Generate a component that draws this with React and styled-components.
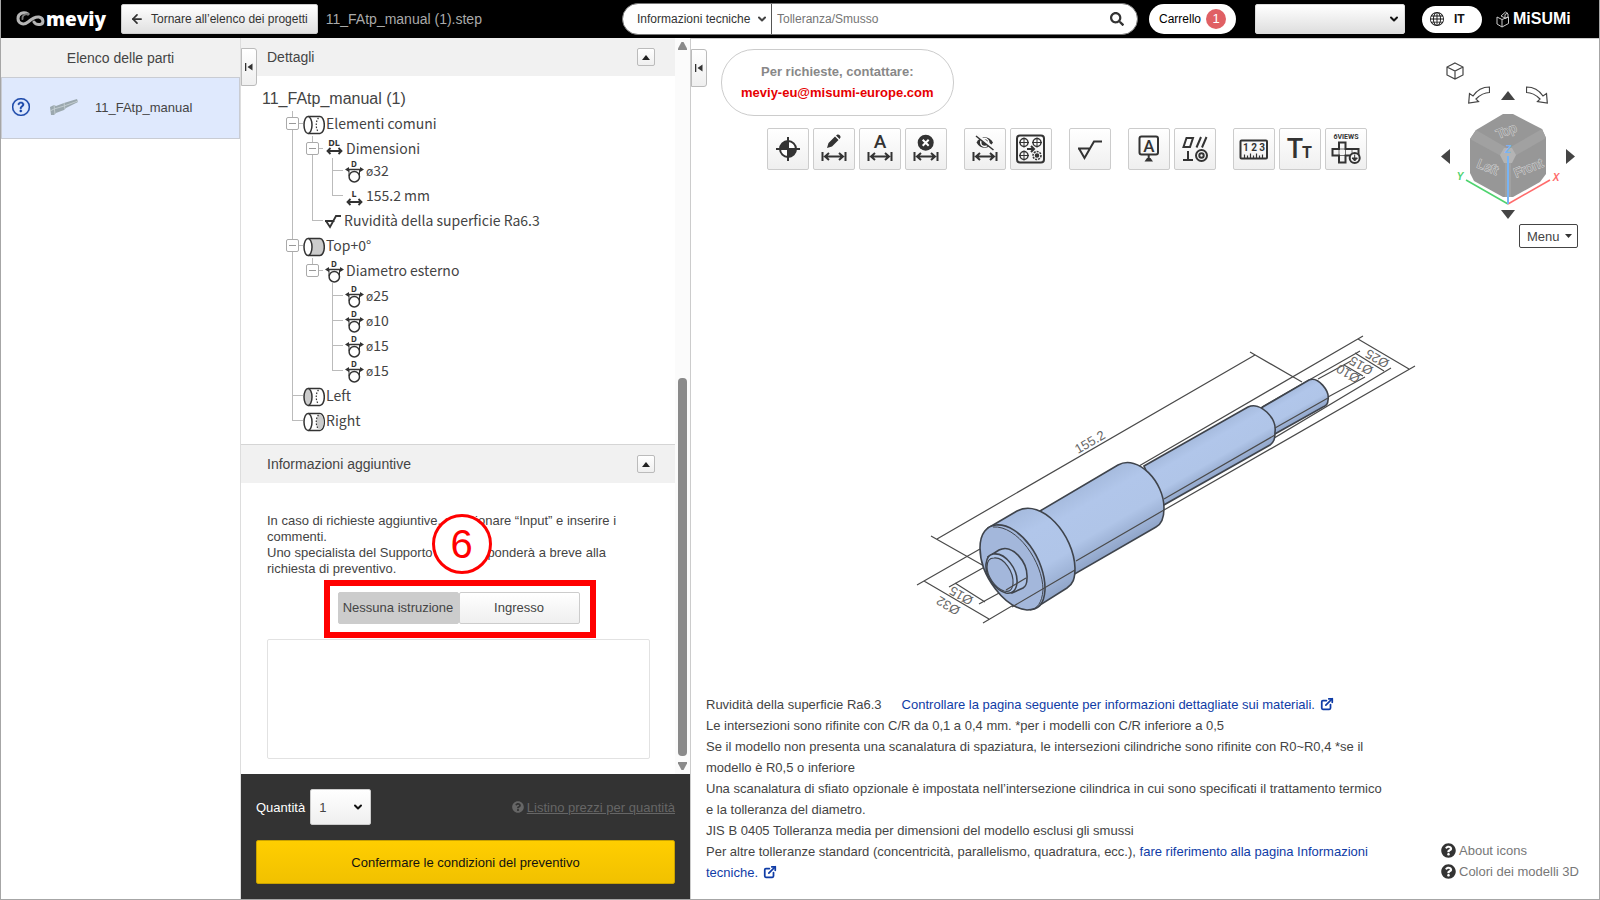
import React, { useState } from "react";
import styled, { createGlobalStyle, css } from "styled-components";
import { ArrowLeft, ChevronDown, ExternalLink } from "lucide-react";
import { FaSearch, FaQuestionCircle } from "react-icons/fa";
import { BsGlobe, BsQuestionCircle } from "react-icons/bs";

const IconText = styled.text`
  fill: #333;
  stroke: none;
  font: ${(p) => (p.$bold ? 700 : 500)} ${(p) => p.$size}px Roboto, sans-serif;
  text-anchor: middle;
`;

const treeRows = [
  { guides: ["box"], icon: "common", label: "Elementi comuni" },
  { guides: ["line", "box"], icon: "dl", label: "Dimensioni" },
  { guides: ["line", "line", "tee"], icon: "d", label: "32", tight: true },
  { guides: ["line", "line", "end"], icon: "l", label: "155.2 mm" },
  { guides: ["line", "end"], icon: "rough", label: "Ruvidità della superficie Ra6.3" },
  { guides: ["box"], icon: "top", label: "Top+0°" },
  { guides: ["line", "boxEnd"], icon: "d", label: "Diametro esterno", group: true },
  { guides: ["line", "none", "tee"], icon: "d", label: "25" },
  { guides: ["line", "none", "tee"], icon: "d", label: "10" },
  { guides: ["line", "none", "tee"], icon: "d", label: "15" },
  { guides: ["line", "none", "end"], icon: "d", label: "15" },
  { guides: ["tee"], icon: "left", label: "Left" },
  { guides: ["end"], icon: "right", label: "Right" },
];

function Cylinder({ kind }) {
  return (
    <svg width="22" height="25" fill="none" stroke="#333" strokeWidth="1.5">
      <path
        d="M5 5.5H17C19.5 5.5 21.3 9.5 21.3 14S19.5 22.5 17 22.5H5"
        fill={kind === "top" ? "#ccc" : "#fff"}
      />
      {kind === "right" && (
        <path d="M17 6C12 8 12 20 17 22C22 20 22 8 17 6Z" fill="#ccc" stroke="none" />
      )}
      {kind !== "top" && (
        <path d="M15.5 7C12.5 10 12.5 18 15.5 21" strokeDasharray="1.5 1.5" strokeWidth="1.2" />
      )}
      <ellipse cx="5" cy="14" rx="4" ry="8.5" fill={kind === "left" ? "#ccc" : "#fff"} />
    </svg>
  );
}

function TreeIcon({ type }) {
  if (type === "d") {
    return (
      <svg width="22" height="25" fill="none" stroke="#333" strokeWidth="1.5">
        <TinyText x="11" y="9">D</TinyText>
        <path d="M4 11.5H19" />
        <path d="M2 11.5L6 9V14ZM21 11.5L17 9V14Z" fill="#333" stroke="none" />
        <path d="M6 12V18M16.5 12V18" strokeWidth="1" />
        <circle cx="11.3" cy="18.7" r="5.2" fill="#fff" />
      </svg>
    );
  }
  if (type === "dl" || type === "l") {
    const y = type === "dl" ? 15 : 19;
    return (
      <svg width="22" height="25" fill="none" stroke="#333" strokeWidth="1.8">
        <TinyText x="11" y={y - 5} $size={9}>{type.toUpperCase()}</TinyText>
        <path d={`M4.5 ${y}H18.5M7.5 ${y - 3}L4.5 ${y}L7.5 ${y + 3}M15.5 ${y - 3}L18.5 ${y}L15.5 ${y + 3}`} />
      </svg>
    );
  }
  if (type === "rough") {
    return (
      <svg width="20" height="25" fill="none" stroke="#333" strokeWidth="1.8">
        <path d="M2 13H11.5M3 13L7 19L13 8H18" />
      </svg>
    );
  }
  return <Cylinder kind={type} />;
}

const dimArrow = (
  <path d="M9.5 24V33M32.5 24V33M12 28.5H30M16 25L12 28.5L16 32M26 25L30 28.5L26 32" />
);

const toolGroups = [
  [
    {
      name: "Origine",
      art: (
        <>
          <circle cx="21" cy="21" r="8" fill="#fff" />
          <path d="M21 21V13A8 8 0 0 0 13 21ZM21 21V29A8 8 0 0 0 29 21Z" fill="#333" stroke="none" />
          <path d="M21 9V33M9 21H33" />
        </>
      ),
    },
    {
      name: "Modifica quota",
      art: (
        <>
          <path d="M14 20L15.5 15L22 8.5L25.5 12L19 18.5ZM23 7.5L24.5 6.5C26 6 28 8 27.5 9.5L26.5 11Z" fill="#333" stroke="none" />
          {dimArrow}
        </>
      ),
    },
    {
      name: "Testo quota",
      art: (
        <>
          <IconText x="21" y="20" $size={19}>A</IconText>
          {dimArrow}
        </>
      ),
    },
    {
      name: "Elimina quota",
      art: (
        <>
          <circle cx="20.7" cy="14.7" r="8" fill="#333" stroke="none" />
          <path d="M17.7 11.7L23.7 17.7M23.7 11.7L17.7 17.7" stroke="#fff" />
          {dimArrow}
        </>
      ),
    },
  ],
  [
    {
      name: "Nascondi quote",
      art: (
        <>
          <path d="M12.5 14.5C16 7.5 25 7.5 29 14.5C25 21.5 16 21.5 12.5 14.5Z" fill="#333" stroke="none" />
          <circle cx="20.7" cy="14.5" r="4" stroke="#fff" strokeWidth="1.5" />
          <path d="M12.5 6.5L30.5 21" stroke="#f8f8f8" strokeWidth="3" />
          <path d="M12 8L29.5 22" strokeWidth="1.5" />
          {dimArrow}
        </>
      ),
    },
    {
      name: "Fori",
      art: (
        <>
          <rect x="7" y="7.5" width="27" height="27" rx="3" />
          <g strokeWidth="1.5">
            <circle cx="14" cy="14.5" r="4" />
            <circle cx="27" cy="14.5" r="4" />
            <circle cx="14" cy="27.5" r="4" />
            <circle cx="27" cy="27.5" r="4" strokeDasharray="2 1" />
            <circle cx="27" cy="27.5" r="1.5" fill="#333" />
          </g>
          <path d="M9 14.5H19M14 9.5V19.5M22 14.5H32M27 9.5V19.5M9 27.5H19M14 22.5V32.5" strokeWidth="1" />
          <path d="M17 21H24M21 18L24 21L21 24" />
        </>
      ),
    },
  ],
  [
    {
      name: "Rugosità",
      art: <path d="M9 20.5H21M10 20.5L15.5 30L25 13.5H33" />,
    },
  ],
  [
    {
      name: "Riferimento",
      art: (
        <>
          <rect x="11.5" y="8.5" width="18.5" height="18" rx="2" />
          <IconText x="21" y="24" $size={17}>A</IconText>
          <path d="M20.7 26V30" />
          <path d="M16.5 33.5L19 30H22.5L25 33.5Z" fill="#333" stroke="none" />
        </>
      ),
    },
    {
      name: "Tolleranze geometriche",
      art: (
        <>
          <path d="M12.5 10H19L16 19H9.5ZM27 9L22.5 19.5M32.5 9L28 19.5M9 32H19M14 23V32" />
          <circle cx="27.5" cy="27.5" r="5.5" />
          <circle cx="27.5" cy="27.5" r="2.2" />
        </>
      ),
    },
  ],
  [
    {
      name: "Unità",
      art: (
        <>
          <rect x="7.5" y="12.5" width="26.5" height="18" rx="1" />
          <IconText x="21" y="23" $size={10} $bold>1 2 3</IconText>
          <path d="M11.5 30V26.5M14.5 30V27.5M17.5 30V25.5M20.5 30V27.5M23.5 30V25.5M26.5 30V27.5M29.5 30V26.5" strokeWidth="1.2" />
        </>
      ),
    },
    {
      name: "Dimensione testo",
      art: (
        <>
          <IconText x="16" y="30" $size={27}>T</IconText>
          <IconText x="28" y="30" $size={16} $bold>T</IconText>
        </>
      ),
    },
    {
      name: "6 viste",
      art: (
        <>
          <IconText x="21" y="11" $size={7} $bold>6VIEWS</IconText>
          <path d="M14 14.5H20.5V21H33.5V27.5H20.5V34.5H14V27.5H7.5V21H14Z" />
          <path d="M14 21H20.5V27.5H14ZM27 21V27" strokeWidth="0.7" />
          <circle cx="29.7" cy="30" r="5" fill="#f5f5f5" />
          <path d="M29.7 26.5V32M27 30L29.7 33L32.4 30Z" fill="#333" strokeWidth="1" />
        </>
      ),
    },
  ],
];

function Toolbar() {
  return (
    <ToolbarRow>
      {toolGroups.map((group, i) => (
        <ToolGroup key={i}>
          {group.map((tool) => (
            <ToolButton key={tool.name} type="button" aria-label={tool.name}>
              <svg width="42" height="42" fill="none" stroke="#333" strokeWidth="2">
                {tool.art}
              </svg>
            </ToolButton>
          ))}
        </ToolGroup>
      ))}
    </ToolbarRow>
  );
}

// shading across each step of the shaft, all of them share the same axis
function ShaftGradient({ id, r }) {
  return (
    <linearGradient
      id={id}
      gradientUnits="userSpaceOnUse"
      x1={128 - r * 0.5}
      y1={239 - r * 0.87}
      x2={128 + r * 0.5}
      y2={239 + r * 0.87}
    >
      <stop offset="0" stopColor="#a6bbde" />
      <stop offset="0.25" stopColor="#b1c6ea" />
      <stop offset="0.65" stopColor="#b0c5e8" />
      <stop offset="1" stopColor="#8fa4c8" />
    </linearGradient>
  );
}

function ShaftDrawing() {
  return (
    <svg width="530" height="320" viewBox="0 0 530 320" fill="none" stroke="#4a4a4a" strokeWidth="1.2">
      <defs>
        <ShaftGradient id="s10" r={15} />
        <ShaftGradient id="s15" r={22} />
        <ShaftGradient id="s25" r={36} />
        <ShaftGradient id="s32" r={46} />
      </defs>
      <path d="M37 219L355 35M31 216L84 246M350 32L402 62" />
      <path d="M239 146L463 16M264 190L515 46M458 19L509 49" />
      <path d="M362 87L460 31M264 184L491 48M455 33L484 51" />
      <path d="M418 59L451 41M428 77L465 57M444 45L463 56" />
      <path d="M17 265L80 229M24 261L89 299M83 303L139 270" />
      <path d="M49 267L90 244M79 284L112 266M55 263L85 282" />
      <g strokeWidth="1.6" stroke="#3f444c">
        <path d="M361 88L409 60C418 56 430 71 428 80C428 84 426 86 423 87L373 115Z" fill="url(#s10)" />
        <path d="M244 146L348 87C360 81 377 98 375 112C375 119 374 122 370 125L262 186Z" fill="url(#s15)" />
        <path d="M140 191L218 145C238 134 264 162 264 188C264 198 262 204 256 207L173 255Z" fill="url(#s25)" />
        <path d="M88 208L117 191C142 178 174 215 175 248C175 259 173 264 167 268L137 287Z" fill="url(#s32)" />
        <path d="M96 205C120 203 146 240 145 270C144 285 138 290 127 290C105 288 80 256 80 228C80 213 87 206 96 205Z" fill="#a3b7db" />
        <path d="M93 207C117 205 143 242 143 270C142 283 137 289 130 290" strokeWidth="1" />
        <path d="M88 237L99 230C112 223 128 242 127 258C127 264 126 266 123 268L112 273Z" fill="#abc0e3" />
        <path d="M93 234C106 232 118 250 117 263C116 271 112 274 106 273C95 270 85 256 86 244C87 237 89 235 93 234Z" fill="#b0c6ea" />
        <path d="M94 238C104 237 114 252 113 264C112 271 109 272 104 271C95 268 87 256 87 247C87 241 90 238 94 238Z" fill="#a3b7db" strokeWidth="1.2" />
      </g>
      <path d="M176 241L264 190M264 179L375 115M375 108L428 78M112 287L175 250M106 270L126 258" />
      <g stroke="none" fill="#666">
        <DimText transform="translate(178 134) rotate(-30)">155.2</DimText>
        <DimText transform="translate(490 41) rotate(210)">Ø25</DimText>
        <DimText transform="translate(474 48) rotate(210)">Ø15</DimText>
        <DimText transform="translate(461 56) rotate(210)">Ø10</DimText>
        <DimText transform="translate(74 278) rotate(210)">Ø15</DimText>
        <DimText transform="translate(61 288) rotate(210)">Ø32</DimText>
      </g>
    </svg>
  );
}

function ViewCube() {
  return (
    <svg width="104" height="100" fill="none">
      <path d="M47 8H57L86 23L90 32V68L84 76L57 91H47L18 75L14 67V33L20 24Z" fill="#979797" />
      <path d="M14 33L20 24L51 42L47 51ZM90 32L86 23L53 42L57 51ZM49 55H55V91H49Z" fill="#a1a1a1" />
      <path d="M48 42H56L60 49L56 57H48L44 49Z" fill="#b4b4b4" />
      <CubeText transform="translate(52 29) rotate(-22)">Top</CubeText>
      <CubeText transform="translate(30 65) rotate(22)">Left</CubeText>
      <CubeText transform="translate(74 66) rotate(-22)">Front</CubeText>
      <path d="M52 98L10 74" stroke="#4fd36f" strokeWidth="1.5" />
      <path d="M52 98L94 74" stroke="#ff6b6b" strokeWidth="1.5" />
      <path d="M52 98V50" stroke="#78b4f5" strokeWidth="2" />
      <AxisText x="52" y="47" fill="#78b4f5">Z</AxisText>
      <AxisText x="4" y="74" fill="#4fd36f">Y</AxisText>
      <AxisText x="100" y="75" fill="#ff6b6b">X</AxisText>
    </svg>
  );
}

const triangles = {
  up: { w: 14, h: 9, d: "M0 9L7 0L14 9Z" },
  down: { w: 14, h: 9, d: "M0 0L7 9L14 0Z" },
  left: { w: 9, h: 15, d: "M9 0L0 7.5L9 15Z" },
  right: { w: 9, h: 15, d: "M0 0L9 7.5L0 15Z" },
};

function Triangle({ dir }) {
  const { w, h, d } = triangles[dir];
  return (
    <svg width={w} height={h} fill="#444">
      <path d={d} />
    </svg>
  );
}

function Navigator() {
  return (
    <NavBox>
      <HomeButton type="button" aria-label="Vista isometrica">
        <svg width="18" height="18" fill="none" stroke="#444" strokeWidth="1.2">
          <path d="M9 1L17 5V13L9 17L1 13V5ZM1 5L9 9L17 5M9 9V17" />
        </svg>
      </HomeButton>
      <NavTop>
        <BareButton type="button" aria-label="Ruota a sinistra">
          <svg width="22" height="18" fill="none" stroke="#444" strokeWidth="1.2">
            <path d="M21.5 1C15 1 9 4 5 10L1.5 7.5L0.7 17L10.5 15.5L8 13C12 9 16 6.5 21.5 6.5Z" />
          </svg>
        </BareButton>
        <BareButton type="button" aria-label="Su"><Triangle dir="up" /></BareButton>
        <BareButton type="button" aria-label="Ruota a destra">
          <svg width="22" height="18" fill="none" stroke="#444" strokeWidth="1.2">
            <path d="M0.5 1C7 1 13 4 17 10L20.5 7.5L21.3 17L11.5 15.5L14 13C10 9 6 6.5 0.5 6.5Z" />
          </svg>
        </BareButton>
      </NavTop>
      <NavMiddle>
        <BareButton type="button" aria-label="Sinistra"><Triangle dir="left" /></BareButton>
        <ViewCube />
        <BareButton type="button" aria-label="Destra"><Triangle dir="right" /></BareButton>
      </NavMiddle>
      <DownButton type="button" aria-label="Giù"><Triangle dir="down" /></DownButton>
    </NavBox>
  );
}

function CollapseHandle() {
  return (
    <Handle type="button" aria-label="Comprimi pannello">
      <svg width="8" height="8" fill="#333">
        <path d="M0 0H1.3V8H0ZM7.5 0.5V7.5L2.5 4Z" />
      </svg>
    </Handle>
  );
}

function SectionHeader({ title, line }) {
  return (
    <SectionBar $line={line}>
      <SectionTitle>{title}</SectionTitle>
      <ToggleButton type="button" aria-label={`Comprimi ${title}`}>
        <svg width="8" height="5" fill="#222">
          <path d="M0 5L4 0L8 5Z" />
        </svg>
      </ToggleButton>
    </SectionBar>
  );
}

function TopBar() {
  return (
    <Header>
      <HeaderLeft>
        <Logo href="#">
          <svg width="29" height="16" fill="none" stroke="#b5b5b5" strokeWidth="3" strokeLinecap="round">
            <path d="M12 3C7 0 2 3 2 7.5S7 15 12 11C16 7.5 19 5.5 23 6C28 7 28 13 24 13.5C21 14 19 12.5 18 11" />
            <path d="M12 3C8 3 6 5 6.5 8" stroke="#777" strokeWidth="2" />
          </svg>
          <LogoText>meviy</LogoText>
        </Logo>
        <BackButton type="button">
          <ArrowLeft size={14} strokeWidth={3} />
          Tornare all’elenco dei progetti
        </BackButton>
        <FileName>11_FAtp_manual (1).step</FileName>
      </HeaderLeft>
      <SearchBar>
        <SelectWrap>
          <CategorySelect aria-label="Categoria" defaultValue="tech">
            <option value="tech">Informazioni tecniche</option>
          </CategorySelect>
          <SelectArrow $right={4} size={12} strokeWidth={4} />
        </SelectWrap>
        <SearchInput aria-label="Cerca" placeholder="Tolleranza/Smusso" />
        <SearchButton type="button" aria-label="Avvia ricerca">
          <FaSearch size={14} />
        </SearchButton>
      </SearchBar>
      <CartButton type="button">
        Carrello <Badge>1</Badge>
      </CartButton>
      <AccountWrap>
        <AccountSelect aria-label="Account" />
        <SelectArrow $right={5} size={12} strokeWidth={4} color="#111" />
      </AccountWrap>
      <LangButton type="button">
        <BsGlobe size={14} />
        IT
      </LangButton>
      <Brand href="#">
        <svg width="14" height="17" fill="none" stroke="#ccc" strokeWidth="1">
          <path d="M1 6L6 8.5L12.5 6V12.5L6 16L1 13ZM6 8.5V16M5 5L9.5 1L12 3V6L9 7.5V3.5L12 2M5 5L9 7" />
        </svg>
        <BrandText>MiSUMi</BrandText>
      </Brand>
    </Header>
  );
}

function DetailsPanel() {
  const [mode, setMode] = useState("none");
  return (
    <Details>
      <CollapseHandle />
      <ScrollArea>
        <ScrollContent>
          <SectionHeader title="Dettagli" />
          <Tree>
            <TreeTitle>11_FAtp_manual (1)</TreeTitle>
            <TreeList>
              {treeRows.map((row, i) => (
                <TreeRow key={i} $tight={row.tight}>
                  {row.guides.map((g, j) => (
                    <Guide key={j} $type={g}>
                      {g.startsWith("box") && <Expander type="button" aria-label="Comprimi" />}
                    </Guide>
                  ))}
                  <TreeIcon type={row.icon} />
                  <TreeLabel>
                    {row.icon === "d" && !row.group && <Diameter>ø</Diameter>}
                    {row.label}
                  </TreeLabel>
                </TreeRow>
              ))}
            </TreeList>
          </Tree>
          <SectionHeader title="Informazioni aggiuntive" line />
          <Extra>
            <ExtraText>
              In caso di richieste aggiuntive, selezionare “Input” e inserire i commenti.
              <br />
              Uno specialista del Supporto meviy risponderà a breve alla richiesta di preventivo.
            </ExtraText>
            <Choice>
              <ChoiceButton type="button" $active={mode === "none"} onClick={() => setMode("none")}>
                Nessuna istruzione
              </ChoiceButton>
              <ChoiceButton type="button" $active={mode === "input"} onClick={() => setMode("input")}>
                Ingresso
              </ChoiceButton>
              <Marker />
              <Step>6</Step>
            </Choice>
            <Comment aria-label="Commenti" />
          </Extra>
        </ScrollContent>
        <Scrollbar>
          <svg width="9" height="8" fill="#8a8a8a"><path d="M0 8V6.5L3.5 0H5.5L9 6.5V8Z" /></svg>
          <Track><Thumb /></Track>
          <svg width="9" height="8" fill="#8a8a8a"><path d="M0 0V1.5L3.5 8H5.5L9 1.5V0Z" /></svg>
        </Scrollbar>
      </ScrollArea>
      <OrderBar>
        <QuantityRow>
          <QuantityLabel htmlFor="qty">Quantità</QuantityLabel>
          <SelectWrap>
            <QuantitySelect id="qty" defaultValue="1">
              <option>1</option>
              <option>2</option>
            </QuantitySelect>
            <SelectArrow $right={7} size={12} strokeWidth={4} color="#111" />
          </SelectWrap>
          <PriceLink href="#">
            <FaQuestionCircle size={12} />
            <u>Listino prezzi per quantità</u>
          </PriceLink>
        </QuantityRow>
        <ConfirmButton type="button">Confermare le condizioni del preventivo</ConfirmButton>
      </OrderBar>
    </Details>
  );
}

function Viewer() {
  return (
    <ViewerArea>
      <CollapseHandle />
      <ViewerMain>
        <Contact>
          Per richieste, contattare:
          <ContactLink href="mailto:meviy-eu@misumi-europe.com">meviy-eu@misumi-europe.com</ContactLink>
        </Contact>
        <Toolbar />
        <Stage>
          <ShaftDrawing />
        </Stage>
        <Notes>
          <p>
            Ruvidità della superficie Ra6.3
            <NoteLink href="#" $spaced>
              Controllare la pagina seguente per informazioni dettagliate sui materiali.
              <ExternalLink size={14} strokeWidth={3} />
            </NoteLink>
          </p>
          <p>Le intersezioni sono rifinite con C/R da 0,1 a 0,4 mm. *per i modelli con C/R inferiore a 0,5</p>
          <p>
            Se il modello non presenta una scanalatura di spaziatura, le intersezioni cilindriche sono
            rifinite con R0~R0,4 *se il modello è R0,5 o inferiore
          </p>
          <p>
            Una scanalatura di sfiato opzionale è impostata nell’intersezione cilindrica in cui sono
            specificati il trattamento termico e la tolleranza del diametro.
          </p>
          <p>JIS B 0405 Tolleranza media per dimensioni del modello esclusi gli smussi</p>
          <p>
            Per altre tolleranze standard (concentricità, parallelismo, quadratura, ecc.),{" "}
            <NoteLink href="#">
              fare riferimento alla pagina Informazioni tecniche.
              <ExternalLink size={14} strokeWidth={3} />
            </NoteLink>
          </p>
        </Notes>
      </ViewerMain>
      <ViewerSide>
        <Navigator />
        <MenuButton type="button">
          Menu
          <svg width="7" height="4" fill="#333"><path d="M0 0H7L3.5 4Z" /></svg>
        </MenuButton>
        <HelpLinks>
          <HelpLink href="#"><FaQuestionCircle size={15} color="#333" />About icons</HelpLink>
          <HelpLink href="#"><FaQuestionCircle size={15} color="#333" />Colori dei modelli 3D</HelpLink>
        </HelpLinks>
      </ViewerSide>
    </ViewerArea>
  );
}

export default function App() {
  return (
    <Page>
      <GlobalStyle />
      <TopBar />
      <Body>
        <PartList>
          <PartListTitle>Elenco delle parti</PartListTitle>
          <PartItem>
            <BsQuestionCircle size={18} color="#1240a5" strokeWidth={0.4} />
            <svg width="30" height="17">
              <path d="M1 8L5 6L7 7L15 4L28 0L29 3L17 9L15 11L7 14L5 16L2 16Z" fill="#9ba8ae" />
              <path d="M5 6L6 15M15 4L16 10M1 12L5 10L15 7L29 2" stroke="#c2ccd0" fill="none" />
            </svg>
            <PartName>11_FAtp_manual</PartName>
          </PartItem>
        </PartList>
        <DetailsPanel />
        <Viewer />
      </Body>
    </Page>
  );
}

const GlobalStyle = createGlobalStyle`
  * {
    box-sizing: border-box;
  }
  body {
    margin: 0;
    background: #fff;
    color: #444;
    font-family: "Liberation Sans", Arial, sans-serif;
    font-size: 13px;
  }
  button, input, select, textarea {
    font: inherit;
    color: inherit;
    margin: 0;
  }
  svg {
    flex-shrink: 0;
  }
  p {
    margin: 0;
  }
`;

const Page = styled.div`
  display: flex;
  flex-direction: column;
  min-height: 100vh;
  border: 1px solid #a6a6a6;
  border-top: none;
`;

const Header = styled.header`
  display: flex;
  align-items: center;
  height: 38px;
  padding-right: 28px;
  background: #000;
  font-size: 12px;
`;

const HeaderLeft = styled.div`
  display: flex;
  align-items: center;
  flex: 1;
  white-space: nowrap;
`;

const Logo = styled.a`
  display: flex;
  align-items: center;
  gap: 1px;
  width: 105px;
  margin-left: 15px;
  color: #fff;
  text-decoration: none;
`;

const LogoText = styled.span`
  font: 800 19px/24px "Open Sans", sans-serif;
`;

const raised = css`
  background: linear-gradient(#fff, #efefef);
  border: 1px solid #ccc;
`;

const BackButton = styled.button`
  display: flex;
  align-items: center;
  gap: 7px;
  height: 30px;
  padding: 0 9px 0 8px;
  color: #333;
  background: linear-gradient(#fff, #e0e0e0);
  border: 1px solid #ccc;
  border-radius: 2px;
`;

const FileName = styled.span`
  margin-left: 8px;
  color: #aaa;
  font-size: 14px;
`;

const SearchBar = styled.div`
  display: flex;
  flex: 0 1 516px;
  height: 32px;
  background: #fff;
  border: 1px solid #777;
  border-radius: 16px;
  overflow: hidden;
`;

const SelectWrap = styled.div`
  position: relative;
  display: flex;
`;

const SelectArrow = styled(ChevronDown)`
  position: absolute;
  top: 50%;
  right: ${(p) => p.$right}px;
  margin-top: -6px;
  pointer-events: none;
`;

const CategorySelect = styled.select`
  width: 149px;
  padding: 0 14px;
  appearance: none;
  color: #333;
  background: none;
  border: none;
  border-right: 1px solid #555;
`;

const SearchInput = styled.input`
  flex: 1;
  min-width: 0;
  padding: 0 5px;
  background: none;
  border: none;
  &::placeholder {
    color: #757575;
  }
`;

const SearchButton = styled.button`
  display: flex;
  align-items: center;
  padding: 0 13px;
  color: #333;
  background: none;
  border: none;
`;

const CartButton = styled.button`
  display: flex;
  align-items: center;
  gap: 5px;
  height: 30px;
  margin-left: 11px;
  padding: 0 10px;
  color: #000;
  background: #fff;
  border: none;
  border-radius: 15px;
`;

const Badge = styled.span`
  width: 20px;
  height: 20px;
  border-radius: 50%;
  background: #e06064;
  color: #fff;
  font-size: 13px;
  line-height: 20px;
  text-align: center;
`;

const AccountWrap = styled(SelectWrap)`
  margin-left: 19px;
`;

const AccountSelect = styled.select`
  width: 150px;
  height: 30px;
  appearance: none;
  background: linear-gradient(#fff, #dedede);
  border: 1px solid #ddd;
  border-radius: 2px;
`;

const LangButton = styled.button`
  display: flex;
  align-items: center;
  gap: 10px;
  width: 60px;
  height: 27px;
  margin-left: 17px;
  padding: 0 8px;
  color: #111;
  background: #fff;
  border: none;
  border-radius: 14px;
  font-weight: bold;
`;

const Brand = styled.a`
  display: flex;
  align-items: center;
  gap: 3px;
  width: 75px;
  margin-left: 14px;
  color: #fff;
  text-decoration: none;
`;

const BrandText = styled.span`
  font: bold 16px/20px "Liberation Sans Narrow", "Liberation Sans", sans-serif;
`;

const Body = styled.div`
  display: flex;
  flex: 1;
`;

const PartList = styled.aside`
  width: 240px;
  border-right: 1px solid #ddd;
`;

const PartListTitle = styled.div`
  height: 39px;
  background: #f1f1f1;
  font-size: 14px;
  line-height: 40px;
  text-align: center;
`;

const PartItem = styled.div`
  display: flex;
  align-items: center;
  height: 62px;
  padding: 0 0 2px 10px;
  background: #dfe9fd;
  border: 1px solid #c9ccd3;
  svg + svg {
    margin: 0 16px 0 19px;
  }
`;

const PartName = styled.span`
  font-size: 13px;
`;

const Details = styled.section`
  position: relative;
  display: flex;
  flex-direction: column;
  width: 450px;
  border-right: 1px solid #ccc;
`;

const Handle = styled.button`
  position: absolute;
  z-index: 1;
  top: 10px;
  left: 0;
  display: flex;
  align-items: center;
  justify-content: center;
  width: 16px;
  height: 38px;
  padding: 0;
  ${raised}
  border-color: #bbb;
  border-radius: 0 3px 3px 0;
`;

const ScrollArea = styled.div`
  display: flex;
  flex: 1;
`;

const ScrollContent = styled.div`
  display: flex;
  flex-direction: column;
  flex: 1;
`;

const Scrollbar = styled.div`
  display: flex;
  flex-direction: column;
  align-items: center;
  width: 15px;
  padding: 4px 0;
  background: #fbfbfb;
`;

const Track = styled.div`
  display: flex;
  flex: 1;
  align-items: flex-end;
  padding: 6px 0;
`;

const Thumb = styled.div`
  width: 9px;
  height: 54%;
  border-radius: 4px;
  background: #8a8a8a;
`;

const SectionBar = styled.div`
  display: flex;
  align-items: center;
  justify-content: space-between;
  height: ${(p) => (p.$line ? 39 : 38)}px;
  padding: 0 20px 0 26px;
  background: #f1f1f1;
  border-top: ${(p) => (p.$line ? "1px solid #d5d5d5" : "none")};
`;

const SectionTitle = styled.span`
  font-size: 14px;
`;

const ToggleButton = styled.button`
  display: flex;
  align-items: center;
  justify-content: center;
  width: 18px;
  height: 18px;
  padding: 0;
  ${raised}
  border-color: #bbb;
  border-radius: 2px;
`;

const Tree = styled.div`
  padding: 11px 0 11px 21px;
`;

const TreeTitle = styled.div`
  font-size: 16px;
  line-height: 24px;
`;

const TreeList = styled.ul`
  margin: 0;
  padding: 0 0 0 21px;
  list-style: none;
`;

const TreeRow = styled.li`
  display: flex;
  height: 25px;
  margin-top: ${(p) => (p.$tight ? -3 : 0)}px;
`;

const stem = "linear-gradient(#bbb, #bbb) 9px 0 / 1px";
const branch = "linear-gradient(#bbb, #bbb) 9px 12px / 11px 1px no-repeat";
const guideLines = {
  none: "none",
  line: `${stem} 100% no-repeat`,
  tee: `${stem} 100% no-repeat, ${branch}`,
  end: `${stem} 12px no-repeat, ${branch}`,
  box: `${stem} 100% no-repeat, ${branch}`,
  boxEnd: `${stem} 12px no-repeat, ${branch}`,
};

const Guide = styled.span`
  display: flex;
  align-items: center;
  width: 20px;
  background: ${(p) => guideLines[p.$type]};
`;

const Expander = styled.button`
  width: 13px;
  height: 13px;
  margin-left: 3px;
  padding: 0;
  background: linear-gradient(#999, #999) center / 7px 1px no-repeat #fff;
  border: 1px solid #aaa;
  border-radius: 2px;
`;

const TreeLabel = styled.span`
  margin-left: 1px;
  font: 14px/24px "Noto Sans CJK JP", sans-serif;
`;

const Diameter = styled.span`
  font-size: 12px;
`;

const TinyText = styled.text`
  fill: #333;
  stroke: none;
  font: bold ${(p) => p.$size || 8}px "Noto Sans", sans-serif;
  text-anchor: middle;
`;

const Extra = styled.div`
  display: flex;
  flex: 1;
  flex-direction: column;
  padding: 30px 25px 15px 26px;
`;

const ExtraText = styled.p`
  line-height: 16px;
`;

const Choice = styled.div`
  position: relative;
  display: flex;
  align-self: center;
  width: 242px;
  height: 32px;
  margin: 15px 0;
`;

const ChoiceButton = styled.button`
  flex: 1;
  padding: 0 0 2px;
  white-space: nowrap;
  ${raised}
  border-radius: 2px;
  ${(p) => p.$active && "background: #ccc;"}
`;

// tutorial highlight around the choice buttons
const Marker = styled.div`
  position: absolute;
  top: -12px;
  right: -16px;
  bottom: -14px;
  left: -14px;
  border: 6px solid #f00;
  pointer-events: none;
`;

const Step = styled.div`
  position: absolute;
  top: -78px;
  left: 94px;
  width: 60px;
  height: 60px;
  border: 3px solid #f00;
  border-radius: 50%;
  background: #fff;
  color: #f00;
  font-size: 40px;
  line-height: 54px;
  text-align: center;
`;

const Comment = styled.textarea`
  flex: 1;
  min-height: 119px;
  resize: none;
  border: 1px solid #e2e2e2;
  border-radius: 2px;
`;

const OrderBar = styled.div`
  padding: 15px;
  background: #333;
`;

const QuantityRow = styled.div`
  display: flex;
  align-items: center;
  margin-bottom: 15px;
`;

const QuantityLabel = styled.label`
  margin-right: 5px;
  color: #fff;
`;

const QuantitySelect = styled.select`
  width: 61px;
  height: 36px;
  padding: 0 8px;
  appearance: none;
  ${raised}
  border-radius: 2px;
`;

const PriceLink = styled.a`
  display: flex;
  align-items: center;
  gap: 3px;
  margin-left: auto;
  color: #666;
`;

const ConfirmButton = styled.button`
  width: 100%;
  height: 44px;
  color: #111;
  background: linear-gradient(#ffce00, #f1c100);
  border: 1px solid #c9a200;
  border-radius: 2px;
`;

const ViewerArea = styled.main`
  position: relative;
  display: flex;
  flex: 1;
  border-top: 1px solid #ccc;
`;

const ViewerMain = styled.div`
  display: flex;
  flex-direction: column;
  flex: 1;
  padding: 10px 0 16px 15px;
`;

const Contact = styled.address`
  display: flex;
  flex-direction: column;
  align-self: flex-start;
  margin-left: 15px;
  padding: 11px 19px 12px;
  border: 1px solid #ccc;
  border-radius: 33px;
  color: #888;
  font-style: normal;
  font-weight: bold;
  line-height: 21px;
  text-align: center;
`;

const ContactLink = styled.a`
  color: #e60000;
  text-decoration: none;
`;

const ToolbarRow = styled.div`
  display: flex;
  gap: 17px;
  margin: 12px 0 0 61px;
`;

const ToolGroup = styled.div`
  display: flex;
  gap: 4px;
`;

const ToolButton = styled.button`
  display: flex;
  align-items: center;
  justify-content: center;
  width: 42px;
  height: 42px;
  padding: 0;
  ${raised}
  border-radius: 2px;
`;

const Stage = styled.div`
  display: flex;
  flex: 1;
  align-items: flex-end;
  justify-content: flex-end;
  padding-bottom: 54px;
`;

const DimText = styled.text`
  font-size: 13px;
`;

const Notes = styled.div`
  padding-right: 44px;
  line-height: 21px;
`;

const NoteLink = styled.a`
  margin-left: ${(p) => (p.$spaced ? 20 : 0)}px;
  color: #0f3ca6;
  text-decoration: none;
  svg {
    margin-left: 5px;
    vertical-align: -2px;
  }
`;

const ViewerSide = styled.div`
  display: flex;
  flex-direction: column;
  width: 169px;
  padding: 23px 21px 17px 11px;
`;

const NavBox = styled.div`
  display: flex;
  flex-direction: column;
  align-items: center;
  width: 134px;
`;

const BareButton = styled.button`
  display: flex;
  padding: 0;
  background: none;
  border: none;
`;

const HomeButton = styled(BareButton)`
  align-self: flex-start;
  margin-left: 5px;
`;

const NavTop = styled.div`
  display: flex;
  align-items: center;
  gap: 11px;
  margin-top: 6px;
`;

const NavMiddle = styled.div`
  display: flex;
  align-items: center;
  justify-content: space-between;
  align-self: stretch;
  margin: 2px 0 4px;
`;

const DownButton = styled(BareButton)`
  margin-bottom: 5px;
`;

const CubeText = styled.text`
  fill: #979797;
  stroke: #d2d2d2;
  stroke-width: 1px;
  paint-order: stroke;
  font-size: 13px;
  text-anchor: middle;
`;

const AxisText = styled.text`
  font: italic bold 10px "Liberation Sans", sans-serif;
  text-anchor: middle;
`;

const MenuButton = styled.button`
  display: flex;
  align-items: center;
  justify-content: space-between;
  align-self: flex-end;
  width: 59px;
  height: 24px;
  padding: 0 5px 0 7px;
  background: #fff;
  border: 1px solid #444;
  border-radius: 2px;
`;

const HelpLinks = styled.div`
  margin-top: auto;
`;

const HelpLink = styled.a`
  display: flex;
  align-items: center;
  gap: 3px;
  height: 21px;
  color: #777;
  text-decoration: none;
  white-space: nowrap;
`;
